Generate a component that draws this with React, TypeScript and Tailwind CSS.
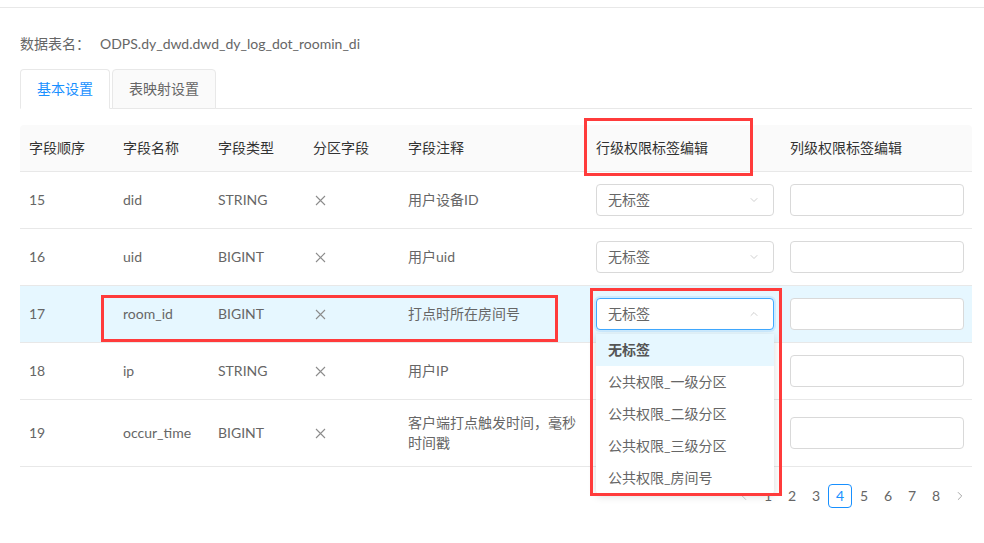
import { ChevronDown, ChevronUp, ChevronLeft, ChevronRight } from "lucide-react";

type Row = {
	no: number;
	name: string;
	type: string;
	note: string;
	active?: boolean;
};

const rows: Row[] = [
	{ no: 15, name: "did", type: "STRING", note: "用户设备ID" },
	{ no: 16, name: "uid", type: "BIGINT", note: "用户uid" },
	{ no: 17, name: "room_id", type: "BIGINT", note: "打点时所在房间号", active: true },
	{ no: 18, name: "ip", type: "STRING", note: "用户IP" },
	{ no: 19, name: "occur_time", type: "BIGINT", note: "客户端打点触发时间，毫秒时间戳" },
];

const options = ["无标签", "公共权限_一级分区", "公共权限_二级分区", "公共权限_三级分区", "公共权限_房间号"];

function Cross() {
	return (
		<svg width="11" height="11" viewBox="0 0 11 11" className="inline-block">
			<path d="M1 1 L10 10 M10 1 L1 10" stroke="#8c8c8c" strokeWidth="1.1" fill="none" />
		</svg>
	);
}

function TagSelect({ open }: { open?: boolean }) {
	return (
		<div className="relative">
			<div
				className={`flex h-8 items-center justify-between rounded bg-white pl-[11px] pr-[13px] ${
					open ? "border border-[#40a9ff] shadow-[0_0_0_2px_rgba(24,144,255,0.12)]" : "border border-[#d9d9d9]"
				}`}
			>
				<span className="text-[#666]">无标签</span>
				{open ? (
					<ChevronUp className="h-3 w-3 text-[#bfbfbf]" strokeWidth={1.5} />
				) : (
					<ChevronDown className="h-3 w-3 text-[#bfbfbf]" strokeWidth={1.5} />
				)}
			</div>
			{open && (
				<div className="absolute left-0 right-0 top-full z-20 mt-1 rounded bg-white shadow-[0_2px_8px_rgba(0,0,0,0.15)]">
					{options.map((o, i) => (
						<div
							key={o}
							className={`flex h-8 items-center px-3 ${
								i === 0 ? "bg-[#e6f7ff] font-semibold text-[#555]" : "text-[#666]"
							}`}
						>
							{o}
						</div>
					))}
				</div>
			)}
		</div>
	);
}

export default function App() {
	return (
		<div
			className="relative min-h-screen bg-white text-sm text-[#666]"
			style={{ fontFamily: 'Lato, "Noto Sans CJK SC", sans-serif' }}
		>
			<div className="h-2 border-b border-[#e8e8e8]" />

			<div className="pl-5 pr-3">
				{/* table name */}
				<div className="mt-[26px] flex leading-5">
					<span>数据表名：</span>
					<span className="ml-[10px]">ODPS.dy_dwd.dwd_dy_log_dot_roomin_di</span>
				</div>

				{/* Tabs */}
				<div className="mt-[15px] flex gap-[2px] border-b border-[#e8e8e8]">
					<div className="-mb-px flex h-10 items-center rounded-t border border-[#e8e8e8] border-b-white bg-white px-4 text-[#1890ff]">
						基本设置
					</div>
					<div className="-mb-px flex h-10 items-center rounded-t border border-[#e8e8e8] bg-[#fafafa] px-4 text-[#666]">
						表映射设置
					</div>
				</div>

				{/* Table */}
				<table className="mt-4 w-full table-fixed border-collapse">
					<colgroup>
						<col className="w-[95px]" />
						<col className="w-[95px]" />
						<col className="w-[95px]" />
						<col className="w-[95px]" />
						<col className="w-[188px]" />
						<col className="w-[194px]" />
						<col />
					</colgroup>
					<thead>
						<tr className="h-[46px] border-b border-[#e8e8e8] bg-[#fafafa] text-left text-[#333]">
							<th className="rounded-tl px-2 pl-[9px] font-normal">字段顺序</th>
							<th className="px-2 font-normal">字段名称</th>
							<th className="px-2 font-normal">字段类型</th>
							<th className="px-2 font-normal">分区字段</th>
							<th className="px-2 font-normal">字段注释</th>
							<th className="px-2 font-normal">行级权限标签编辑</th>
							<th className="rounded-tr px-2 font-normal">列级权限标签编辑</th>
						</tr>
					</thead>
					<tbody>
						{rows.map((r) => (
							<tr key={r.no} className={`border-b border-[#e8e8e8] ${r.active ? "bg-[#e6f7ff]" : ""}`}>
								<td className="py-3 pl-[9px] pr-2">{r.no}</td>
								<td className="px-2 py-3">{r.name}</td>
								<td className="px-2 py-3">{r.type}</td>
								<td className="px-2 py-3 pl-[10px]">
									<Cross />
								</td>
								<td className="px-2 py-[13px] leading-5">{r.note}</td>
								<td className="px-2 py-3">
									{r.no <= 17 && <TagSelect open={r.active} />}
								</td>
								<td className="px-2 py-3">
									<div className="h-8 rounded border border-[#d9d9d9] bg-white" />
								</td>
							</tr>
						))}
					</tbody>
				</table>

				{/* Pagination */}
				<div className="mt-[17px] flex justify-end">
					<div className="flex items-center text-[#666]">
						<div className="flex h-6 w-6 items-center justify-center text-[#bfbfbf]">
							<ChevronLeft className="h-3.5 w-3.5" strokeWidth={1.5} />
						</div>
						{[1, 2, 3, 4, 5, 6, 7, 8].map((p) => (
							<div
								key={p}
								className={`flex h-6 w-6 items-center justify-center rounded ${
									p === 4 ? "border border-[#1890ff] text-[#1890ff]" : ""
								}`}
							>
								{p}
							</div>
						))}
						<div className="flex h-6 w-6 items-center justify-center text-[#999]">
							<ChevronRight className="h-3.5 w-3.5" strokeWidth={1.5} />
						</div>
					</div>
				</div>
			</div>

			{/* red annotation boxes */}
			<div className="pointer-events-none absolute left-[584px] top-[118px] h-[58px] w-[169px] border-[3px] border-[#ff3b3b]" />
			<div className="pointer-events-none absolute left-[101px] top-[295px] h-[47px] w-[457px] border-[3px] border-[#ff3b3b]" />
			<div className="pointer-events-none absolute left-[590px] top-[288px] z-30 h-[208px] w-[192px] border-[3px] border-[#ff3b3b]" />
		</div>
	);
}
